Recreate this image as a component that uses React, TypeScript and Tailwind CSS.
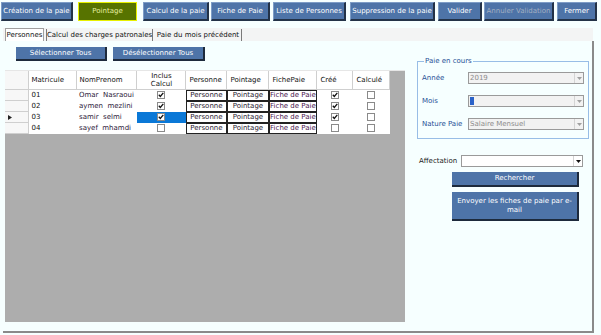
import React from 'react';

const toolbar = [
  { label: 'Création de la paie', cls: 'w-[72px] ml-[1px]' },
  { label: 'Pointage', cls: 'w-[59px] ml-[5px]', active: true },
  { label: 'Calcul de la paie', cls: 'w-[66px] ml-[6px]' },
  { label: 'Fiche de Paie', cls: 'w-[59px] ml-[2px]' },
  { label: 'Liste de Personnes', cls: 'w-[73px] ml-[3px]' },
  { label: 'Suppression de la paie', cls: 'w-[85px] ml-[4px]' },
  { label: 'Valider', cls: 'w-[44px] ml-[3px]' },
  { label: 'Annuler Validation', cls: 'w-[70px] ml-[2px]', disabled: true },
  { label: 'Fermer', cls: 'w-[40px] ml-[3px]' },
];

const rows = [
  { mat: '01', nom: 'Omar  Nasraoui', inclus: true, cree: true },
  { mat: '02', nom: 'aymen  mezlini', inclus: true, cree: true },
  { mat: '03', nom: 'samir  selmi', inclus: true, cree: true, current: true },
  { mat: '04', nom: 'sayef  mhamdi', inclus: false, cree: false },
];

function Check({ checked }: { checked: boolean }) {
  return (
    <svg width="8" height="8" viewBox="0 0 8 8" className="mx-auto block">
      <rect x="0.5" y="0.5" width="7" height="7" fill="#fff" stroke="#8a8a8a" />
      {checked && <path d="M1.8 3.8 L3.3 5.5 L6.3 1.8" fill="none" stroke="#111" strokeWidth="1.3" />}
    </svg>
  );
}

function SelectBox({ value, disabled, highlight }: { value?: string; disabled?: boolean; highlight?: boolean }) {
  return (
    <div
      className={`flex h-[12px] items-center border border-[#9a9a9a] ${disabled ? 'bg-[#f2f2f2] text-[#8c8c8c]' : 'bg-white text-black'}`}
    >
      <div className="flex-1 pl-[1px] text-[7px] leading-none">
        {highlight ? <span className="block h-[8px] w-[4px] bg-[#2a62c8]" /> : value}
      </div>
      <div className="flex h-full w-[9px] items-center justify-center border-l border-[#d4d4d4]">
        <svg width="5" height="3" viewBox="0 0 5 3">
          <path d="M0 0 H5 L2.5 3 Z" fill={disabled ? '#a0a0a0' : '#111'} />
        </svg>
      </div>
    </div>
  );
}

export default function App() {
  return (
    <div className="w-[601px] h-[335px] overflow-hidden bg-[#f6ffff] font-['DejaVu_Sans',sans-serif]">
      {/* Toolbar */}
      <div className="flex pt-[2px]">
        {toolbar.map((b) => (
          <div
            key={b.label}
            className={`${b.cls} h-[19px] flex items-center justify-center text-[7px] whitespace-nowrap ${
              b.active
                ? 'bg-[#577300] border border-[#e8f000] text-[#e6f0a0]'
                : 'bg-[#4e74a8] border-t border-l border-[#7d9cc6] border-r-2 border-b-2 border-r-[#233247] border-b-[#233247] ' +
                  (b.disabled ? 'text-[#a3afc2]' : 'text-white')
            }`}
          >
            {b.label}
          </div>
        ))}
      </div>

      {/* Tabs */}
      <div className="ml-[3px] mt-[7px] w-[590px] h-[13px] bg-[#f3f4f4] flex items-end text-[7px] text-[#111] whitespace-nowrap">
        <div className="ml-[2px] w-[39px] h-[13px] flex items-center justify-center bg-white border-t border-l border-r border-[#a0a0a0]">
          Personnes
        </div>
        <div className="ml-[2px] w-[107px] h-[12px] flex items-center justify-center border-l border-r border-[#7a7a7a]">
          Calcul des charges patronales
        </div>
        <div className="ml-[2px] w-[87px] h-[12px] flex items-center justify-center border-r border-[#7a7a7a]">
          Paie du mois précédent
        </div>
      </div>

      {/* Panel */}
      <div className="ml-[3px] w-[591px] h-[292px] border-r-2 border-b-2 border-[#8a8a8a] flex">
        {/* Left column */}
        <div className="ml-[2px] w-[400px]">
          <div className="flex pt-[6px]">
            <div className="ml-[11px] w-[91px] h-[14px] flex items-center justify-center bg-[#4e74a8] border-r-2 border-b-2 border-[#1d2a3c] text-white text-[7px]">
              Sélectionner Tous
            </div>
            <div className="ml-[6px] w-[92px] h-[14px] flex items-center justify-center bg-[#4e74a8] border-r-2 border-b-2 border-[#1d2a3c] text-white text-[7px]">
              Désélectionner Tous
            </div>
          </div>

          {/* Grid */}
          <div className="mt-[9px] h-[252px] bg-[#adadad] border-t border-[#e6e6e6]">
            <table className="border-collapse text-[7px] text-[#111] bg-white">
              <colgroup>
                <col className="w-[23px]" />
                <col className="w-[48px]" />
                <col className="w-[60px]" />
                <col className="w-[49px]" />
                <col className="w-[41px]" />
                <col className="w-[42px]" />
                <col className="w-[48px]" />
                <col className="w-[36px]" />
                <col className="w-[37px]" />
              </colgroup>
              <thead>
                <tr className="h-[18px]">
                  <th className="bg-[#f7f7f7] border-r border-b border-[#cfcfcf]" />
                  {['Matricule', 'NomPrenom', 'Inclus Calcul', 'Personne', 'Pointage', 'FichePaie', 'Créé', 'Calculé'].map((h) => (
                    <th
                      key={h}
                      className={`bg-white border-r border-b border-[#cfcfcf] font-normal leading-[8px] px-[3px] ${
                        h === 'Inclus Calcul' ? 'text-center' : 'text-left'
                      }`}
                    >
                      {h === 'Inclus Calcul' ? (
                        <>
                          Inclus
                          <br />
                          Calcul
                        </>
                      ) : (
                        h
                      )}
                    </th>
                  ))}
                </tr>
              </thead>
              <tbody>
                {rows.map((r) => (
                  <tr key={r.mat} className="h-[11px]">
                    <td className="bg-[#f7f7f7] border-r border-b border-[#cfcfcf] pl-[3px]">
                      {r.current && (
                        <svg width="4" height="5" viewBox="0 0 4 5" className="block">
                          <path d="M0 0 L4 2.5 L0 5 Z" fill="#222" />
                        </svg>
                      )}
                    </td>
                    <td className="px-[3px] leading-none">{r.mat}</td>
                    <td className="px-[3px] leading-none whitespace-pre text-[#2c1838]">{r.nom}</td>
                    <td className={r.current ? 'bg-[#0a78d7]' : ''}>
                      <Check checked={r.inclus} />
                    </td>
                    <td className="p-0">
                      <div className="h-[11px] flex items-center justify-center border border-[#222] leading-none text-[#2a1a30]">
                        Personne
                      </div>
                    </td>
                    <td className="p-0">
                      <div className="h-[11px] flex items-center justify-center border border-[#222] leading-none text-[#2a1a30]">
                        Pointage
                      </div>
                    </td>
                    <td className="p-0">
                      <div className="h-[11px] flex items-center justify-center border border-[#222] leading-none text-[#4a2050] whitespace-nowrap overflow-hidden">
                        Fiche de Paie
                      </div>
                    </td>
                    <td>
                      <Check checked={r.cree} />
                    </td>
                    <td>
                      <Check checked={false} />
                    </td>
                  </tr>
                ))}
              </tbody>
            </table>
          </div>
        </div>

        {/* Right column */}
        <div className="ml-[12px] w-[172px] pt-[17px]">
          <fieldset className="border border-[#98bde6] h-[81px] px-[4px] pb-[4px]">
            <legend className="ml-[2px] text-[7px] text-[#1f4f96] leading-none px-[1px]">Paie en cours</legend>
            <div className="flex items-center mt-[7px]">
              <span className="w-[46px] text-[7px] text-[#1f4f96]">Année</span>
              <div className="w-[116px]">
                <SelectBox value="2019" disabled />
              </div>
            </div>
            <div className="flex items-center mt-[11px]">
              <span className="w-[46px] text-[7px] text-[#1f4f96]">Mois</span>
              <div className="w-[116px]">
                <SelectBox highlight disabled />
              </div>
            </div>
            <div className="flex items-center mt-[11px]">
              <span className="w-[46px] text-[7px] text-[#1f4f96]">Nature Paie</span>
              <div className="w-[116px]">
                <SelectBox value="Salaire Mensuel" disabled />
              </div>
            </div>
          </fieldset>

          <div className="flex items-center mt-[16px]">
            <span className="w-[44px] pl-[2px] text-[7px] text-[#222]">Affectation</span>
            <div className="w-[122px]">
              <SelectBox value="" />
            </div>
          </div>
          <div className="ml-[35px] mt-[5px] w-[127px] h-[15px] flex items-center justify-center bg-[#4e74a8] border-r-2 border-b-2 border-[#1d2a3c] text-white text-[7px]">
            Rechercher
          </div>
          <div className="ml-[35px] mt-[5px] w-[127px] h-[29px] flex items-center justify-center text-center bg-[#4e74a8] border-r-2 border-b-2 border-[#1d2a3c] text-white text-[7px] leading-[9px] px-[2px]">
            Envoyer les fiches de paie par e-mail
          </div>
        </div>
      </div>
    </div>
  );
}
